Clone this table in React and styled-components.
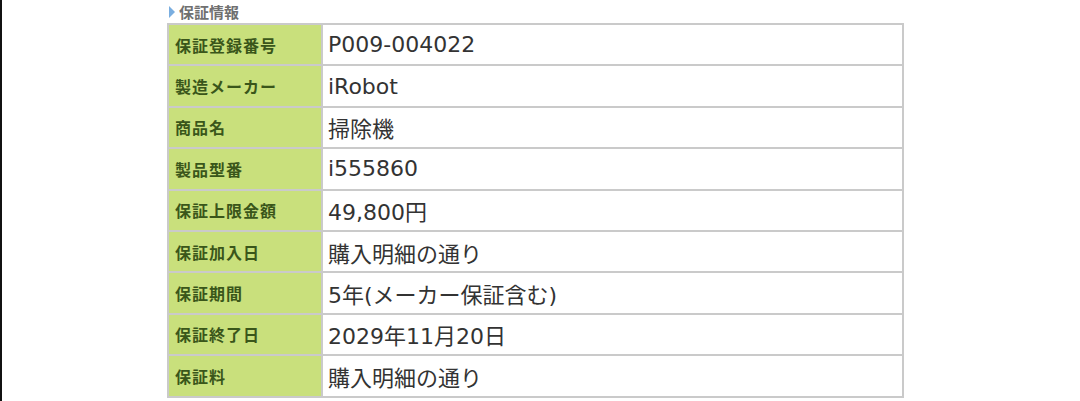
import React from 'react'
import styled, { createGlobalStyle } from 'styled-components'

const GlobalStyle = createGlobalStyle`
  html, body {
    margin: 0;
    padding: 0;
    background: #fff;
  }
  body {
    font-family: "Noto Sans CJK JP", "Noto Sans", sans-serif;
  }
`

const rows = [
  ['保証登録番号', 'P009-004022'],
  ['製造メーカー', 'iRobot'],
  ['商品名', '掃除機'],
  ['製品型番', 'i555860'],
  ['保証上限金額', '49,800円'],
  ['保証加入日', '購入明細の通り'],
  ['保証期間', '5年(メーカー保証含む)'],
  ['保証終了日', '2029年11月20日'],
  ['保証料', '購入明細の通り'],
]

function App() {
  return (
    <Page>
      <GlobalStyle />
      <Section>
        <Heading>
          <Arrow />
          保証情報
        </Heading>
        <Table>
          <tbody>
            {rows.map(([label, value]) => (
              <tr key={label}>
                <Label>{label}</Label>
                <Value>{value}</Value>
              </tr>
            ))}
          </tbody>
        </Table>
      </Section>
    </Page>
  )
}

export default App

const Page = styled.div`
  height: 401px;
  box-sizing: border-box;
  border-left: 2px solid #111;
  overflow: hidden;
`

const Section = styled.div`
  width: 737px;
  padding: 3px 0 0 165px;
`

const Heading = styled.div`
  display: flex;
  align-items: center;
  height: 17px;
  margin-bottom: 3px;
  font-size: 15px;
  font-weight: 700;
  color: #707070;
  line-height: 17px;
`

const Arrow = styled.span`
  width: 0;
  height: 0;
  margin: 0 4px 0 2px;
  border-top: 6px solid transparent;
  border-bottom: 6px solid transparent;
  border-left: 6px solid #7aaee0;
`

const Table = styled.table`
  width: 737px;
  border-collapse: collapse;
  table-layout: fixed;
`

const Label = styled.td`
  width: 146px;
  height: 39.4px;
  padding: 0 0 0 6px;
  background: #c9e07c;
  border: 2px solid #cacaca;
  color: #3a561a;
  font-size: 16px;
  font-weight: 700;
  letter-spacing: 1px;
  vertical-align: middle;
  white-space: nowrap;
`

const Value = styled.td`
  height: 39.4px;
  padding: 0 0 0 5px;
  background: #fff;
  border: 2px solid #cacaca;
  color: #333;
  font-family: "DejaVu Sans", "Noto Sans CJK JP", sans-serif;
  font-size: 22px;
  font-weight: 400;
  vertical-align: middle;
  white-space: nowrap;
`
